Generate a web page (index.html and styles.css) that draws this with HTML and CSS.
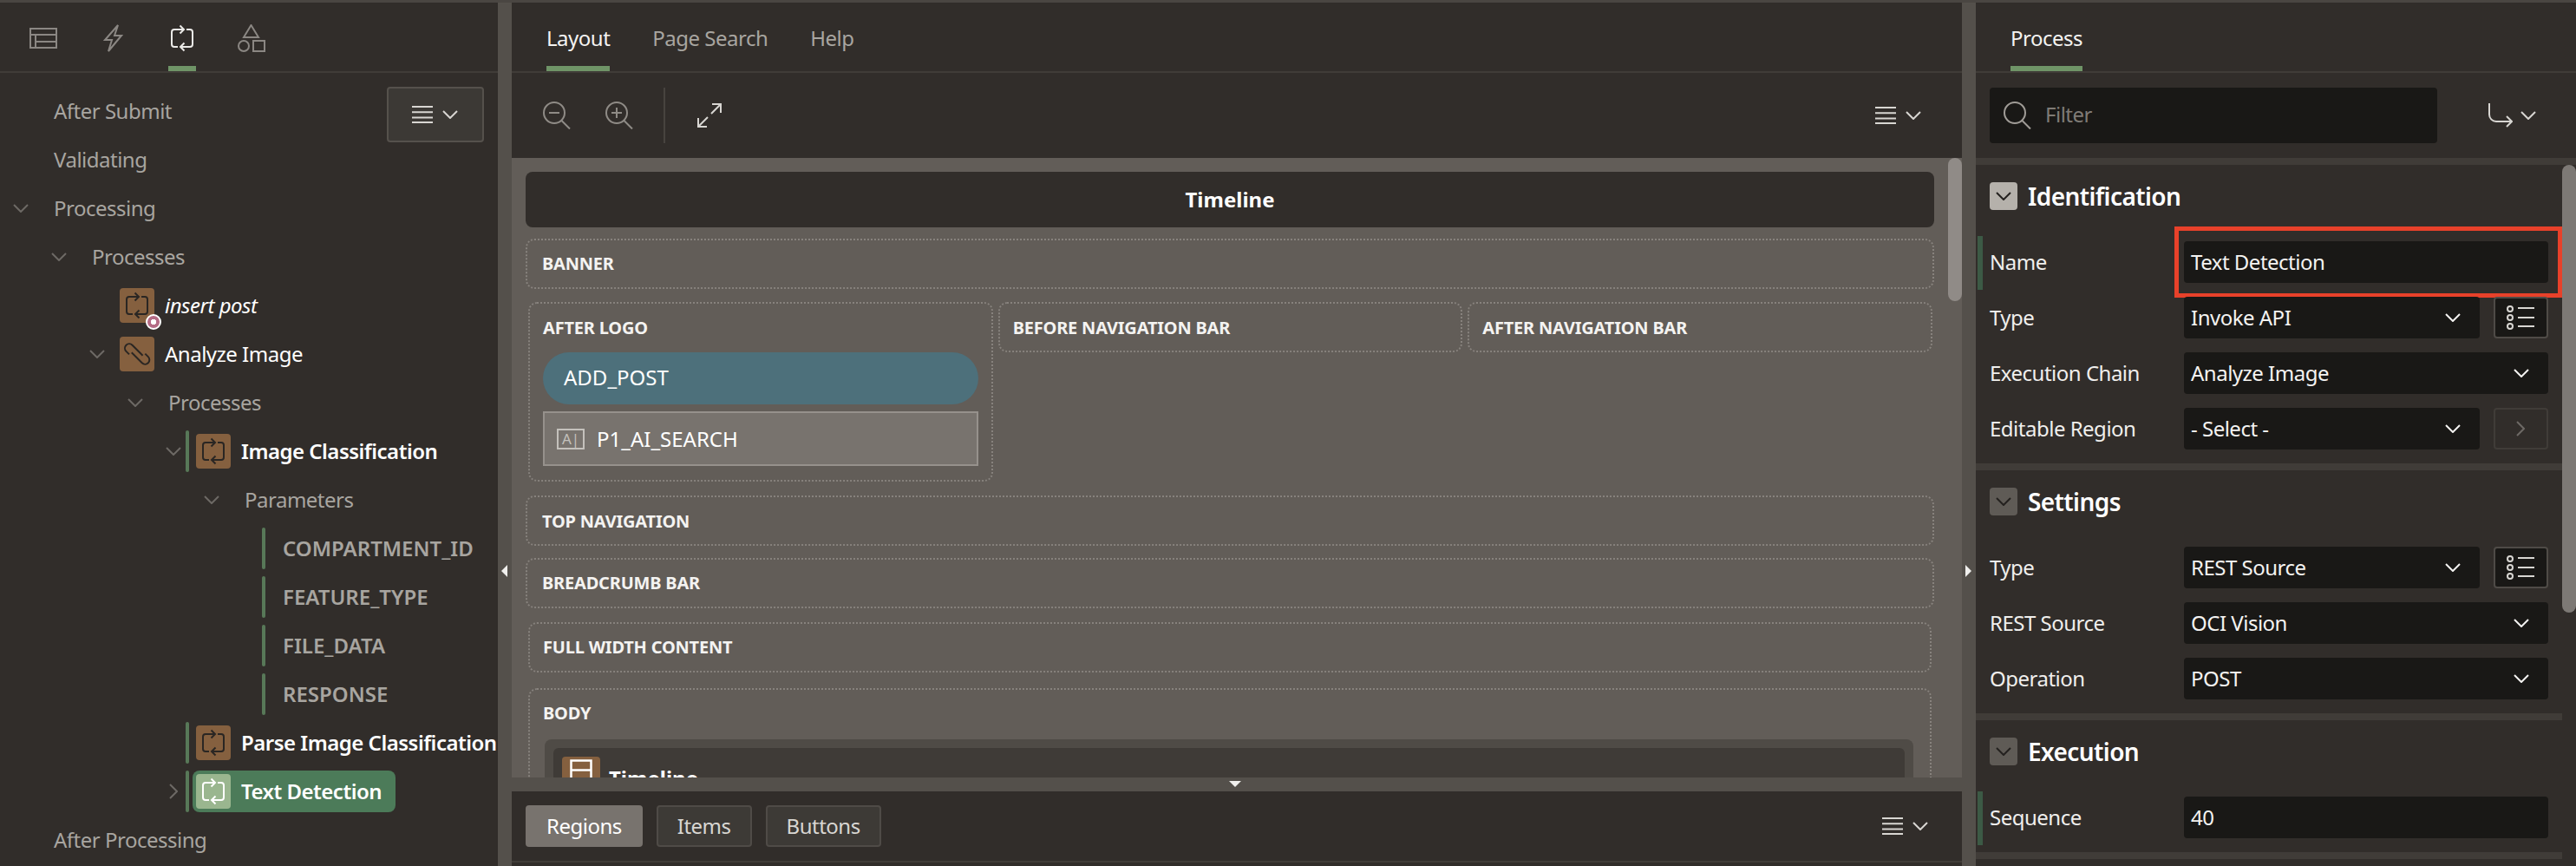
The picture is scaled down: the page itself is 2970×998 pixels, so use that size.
FILE: index.html
```html
<!doctype html>
<html lang="en">
  <head>
    <meta charset="UTF-8" />
    <title>Page Designer</title>
    <link rel="stylesheet" href="styles.css">
  </head>
  <body>
    <svg class="defs" width="0" height="0">
      <symbol id="loop" viewBox="0 0 32 32">
        <path d="M17 6H7a3 3 0 0 0-3 3v14a3 3 0 0 0 3 3h4M13.5 1.5 18 6l-4.500 4.500M21 6h4a3 3 0 0 1 3 3v14a3 3 0 0 1-3 3H15M18.500 21.500 14 26l4.500 4.500" fill="none" stroke="currentColor" stroke-width="2" />
      </symbol>
      <symbol id="chain" viewBox="0 0 32 32">
        <path d="M7 16.400 3.460 12.840A5 5 0 0 1 10.540 5.760L22.540 17.760M25.300 15.600 28.840 19.160A5 5 0 0 1 21.760 26.240L9.760 14.240" fill="none" stroke="currentColor" stroke-width="2" />
      </symbol>
      <symbol id="chev" viewBox="0 0 18 10">
        <path d="M1 1l8 8 8-8" fill="none" stroke="currentColor" stroke-width="2" />
      </symbol>
      <symbol id="menu" viewBox="0 0 24 20">
        <path d="M0 1h24M0 7.300h24M0 13.600h24M0 19h24" fill="none" stroke="currentColor" stroke-width="2" />
      </symbol>
      <symbol id="lov" viewBox="0 0 32 28">
        <circle cx="4" cy="4" r="3" fill="none" stroke="currentColor" stroke-width="2" />
        <circle cx="4" cy="14" r="3" fill="none" stroke="currentColor" stroke-width="2" />
        <circle cx="4" cy="24" r="3" fill="none" stroke="currentColor" stroke-width="2" />
        <path d="M13 3h19M13 14h19M13 24h19" fill="none" stroke="currentColor" stroke-width="2" />
      </symbol>
    </svg>

    <div class="app">
      <!-- tree column -->
      <div class="panel tree-panel">
        <div class="tabs icon-tabs">
          <div class="icon-tab">
            <svg width="32" height="24" viewBox="0 0 32 24"><path d="M1 1h30v22H1zM1 8h30M7 8v15M7 16h24" fill="none" stroke="currentColor" stroke-width="2" /></svg>
          </div>
          <div class="icon-tab">
            <svg width="24" height="32" viewBox="0 0 24 32"><path d="M18 1 3 18h8L7 31l15-18h-8z" fill="none" stroke="currentColor" stroke-width="2" /></svg>
          </div>
          <div class="icon-tab active">
            <svg width="32" height="32"><use href="#loop" /></svg>
          </div>
          <div class="icon-tab">
            <svg width="32" height="32" viewBox="0 0 32 32"><path d="M15.500 1 24 15H7zM18 19h13v12H18z" fill="none" stroke="currentColor" stroke-width="2" /><circle cx="7" cy="25" r="6" fill="none" stroke="currentColor" stroke-width="2" /></svg>
          </div>
        </div>

        <div class="tree">
          <div class="tree-row"><span class="twist"></span><span class="label">After Submit</span></div>
          <div class="tree-row"><span class="twist"></span><span class="label">Validating</span></div>
          <div class="tree-row"><span class="twist"><svg class="chev" width="18" height="10"><use href="#chev" /></svg></span><span class="label">Processing</span></div>
          <div class="tree-row lvl-1"><span class="twist"><svg class="chev" width="18" height="10"><use href="#chev" /></svg></span><span class="label">Processes</span></div>
          <div class="tree-row lvl-2">
            <span class="twist"></span>
            <span class="tile"><svg width="32" height="32"><use href="#loop" /></svg><span class="badge"></span></span>
            <span class="name italic">insert post</span>
          </div>
          <div class="tree-row lvl-2">
            <span class="twist"><svg class="chev" width="18" height="10"><use href="#chev" /></svg></span>
            <span class="tile"><svg width="32" height="32"><use href="#chain" /></svg></span>
            <span class="name">Analyze Image</span>
          </div>
          <div class="tree-row lvl-3"><span class="twist"><svg class="chev" width="18" height="10"><use href="#chev" /></svg></span><span class="label">Processes</span></div>
          <div class="tree-row lvl-4 barred">
            <span class="twist"><svg class="chev" width="18" height="10"><use href="#chev" /></svg></span>
            <span class="bar"></span>
            <span class="tile"><svg width="32" height="32"><use href="#loop" /></svg></span>
            <span class="name bold">Image Classification</span>
          </div>
          <div class="tree-row lvl-5"><span class="twist"><svg class="chev" width="18" height="10"><use href="#chev" /></svg></span><span class="label">Parameters</span></div>
          <div class="tree-row lvl-6 barred param"><span class="twist"></span><span class="bar"></span><span class="label">COMPARTMENT_ID</span></div>
          <div class="tree-row lvl-6 barred param"><span class="twist"></span><span class="bar"></span><span class="label">FEATURE_TYPE</span></div>
          <div class="tree-row lvl-6 barred param"><span class="twist"></span><span class="bar"></span><span class="label">FILE_DATA</span></div>
          <div class="tree-row lvl-6 barred param"><span class="twist"></span><span class="bar"></span><span class="label">RESPONSE</span></div>
          <div class="tree-row lvl-4 barred">
            <span class="twist"></span>
            <span class="bar"></span>
            <span class="tile"><svg width="32" height="32"><use href="#loop" /></svg></span>
            <span class="name bold">Parse Image Classification</span>
          </div>
          <div class="tree-row lvl-4 barred selected">
            <span class="twist"><svg class="chev right" width="18" height="10"><use href="#chev" /></svg></span>
            <span class="bar"></span>
            <span class="pill">
              <span class="tile"><svg width="32" height="32"><use href="#loop" /></svg></span>
              <span class="name bold">Text Detection</span>
            </span>
          </div>
          <div class="tree-row"><span class="twist"></span><span class="label">After Processing</span></div>
        </div>

        <div class="tree-menu">
          <svg width="24" height="20"><use href="#menu" /></svg>
          <svg width="18" height="10"><use href="#chev" /></svg>
        </div>
      </div>

      <div class="splitter"><span class="arrow left"></span></div>

      <!-- layout column -->
      <div class="panel center-panel">
        <div class="tabs text-tabs">
          <div class="text-tab active">Layout</div>
          <div class="text-tab">Page Search</div>
          <div class="text-tab">Help</div>
        </div>

        <div class="toolbar">
          <svg class="zoom-icon" width="32" height="32" viewBox="0 0 32 32"><circle cx="13" cy="13" r="12" fill="none" stroke="currentColor" stroke-width="2" /><path d="M7 13h12M21.500 22 31 31.500" fill="none" stroke="currentColor" stroke-width="2" /></svg>
          <svg class="zoom-icon" width="32" height="32" viewBox="0 0 32 32"><circle cx="13" cy="13" r="12" fill="none" stroke="currentColor" stroke-width="2" /><path d="M7 13h12M13 7v12M21.500 22 31 31.500" fill="none" stroke="currentColor" stroke-width="2" /></svg>
          <span class="divider"></span>
          <svg class="expand-icon" width="28" height="28" viewBox="0 0 28 28"><path d="M17 1h10v10M27 1 16 12M11 27H1V17M1 27l11-11" fill="none" stroke="currentColor" stroke-width="2" /></svg>
          <span class="menu-btn">
            <svg width="24" height="20"><use href="#menu" /></svg>
            <svg width="18" height="10"><use href="#chev" /></svg>
          </span>
        </div>

        <div class="canvas">
          <div class="page-title">Timeline</div>
          <div class="slot banner">BANNER</div>
          <div class="slot-row">
            <div class="slot">
              AFTER LOGO
              <div class="btn-comp">ADD_POST</div>
              <div class="item-comp"><span class="ai-icon">A|</span>P1_AI_SEARCH</div>
            </div>
            <div class="slot short">BEFORE NAVIGATION BAR</div>
            <div class="slot short">AFTER NAVIGATION BAR</div>
          </div>
          <div class="slot top-nav">TOP NAVIGATION</div>
          <div class="slot crumb">BREADCRUMB BAR</div>
          <div class="slot inset full">FULL WIDTH CONTENT</div>
          <div class="slot inset body-slot">
            BODY
            <div class="region-wrap">
              <div class="region">
                <span class="region-tile">
                  <svg width="26" height="38" viewBox="0 0 26 38"><path d="M1.500 1.500h23v35h-23zM1.500 12.500h23M1.500 23.500h23" fill="none" stroke="#fff" stroke-width="2.500" /></svg>
                </span>
                <span class="region-name">Timeline</span>
              </div>
            </div>
          </div>
          <span class="canvas-scroll"></span>
        </div>

        <div class="h-splitter"><span class="arrow down"></span></div>

        <div class="gallery">
          <span class="gal-btn active">Regions</span>
          <span class="gal-btn">Items</span>
          <span class="gal-btn">Buttons</span>
          <span class="menu-btn gal-menu">
            <svg width="24" height="20"><use href="#menu" /></svg>
            <svg width="18" height="10"><use href="#chev" /></svg>
          </span>
        </div>
      </div>

      <div class="splitter"><span class="arrow right"></span></div>

      <!-- property editor -->
      <div class="panel props-panel">
        <div class="tabs text-tabs props-tabs">
          <div class="text-tab active">Process</div>
        </div>

        <div class="filter-bar">
          <div class="filter">
            <svg class="search-icon" width="32" height="32" viewBox="0 0 32 32"><circle cx="13" cy="13" r="12" fill="none" stroke="currentColor" stroke-width="2" /><path d="M21.500 22 31 31.500" fill="none" stroke="currentColor" stroke-width="2" /></svg>
            <span class="filter-text">Filter</span>
          </div>
          <span class="goto">
            <svg width="28" height="28" viewBox="0 0 28 28"><path d="M1 0v13a8 8 0 0 0 8 8h18M21 15l6 6-6 6" fill="none" stroke="currentColor" stroke-width="2" /></svg>
            <svg width="18" height="10"><use href="#chev" /></svg>
          </span>
        </div>

        <div class="props">
          <div class="section">
            <div class="section-head">
              <span class="toggle focus"><svg width="18" height="10"><use href="#chev" /></svg></span>
              Identification
            </div>
            <div class="prop req">
              <span class="prop-label">Name</span>
              <div class="field"><span>Text Detection</span></div>
              <span class="highlight"></span>
            </div>
            <div class="prop">
              <span class="prop-label">Type</span>
              <div class="field select"><span>Invoke API</span><svg width="18" height="10"><use href="#chev" /></svg></div>
              <span class="lov"><svg width="32" height="28"><use href="#lov" /></svg></span>
            </div>
            <div class="prop">
              <span class="prop-label">Execution Chain</span>
              <div class="field select"><span>Analyze Image</span><svg width="18" height="10"><use href="#chev" /></svg></div>
            </div>
            <div class="prop">
              <span class="prop-label">Editable Region</span>
              <div class="field select"><span>- Select -</span><svg width="18" height="10"><use href="#chev" /></svg></div>
              <span class="lov dim"><svg class="chev right" width="18" height="10"><use href="#chev" /></svg></span>
            </div>
          </div>

          <div class="section">
            <div class="section-head">
              <span class="toggle"><svg width="18" height="10"><use href="#chev" /></svg></span>
              Settings
            </div>
            <div class="prop">
              <span class="prop-label">Type</span>
              <div class="field select"><span>REST Source</span><svg width="18" height="10"><use href="#chev" /></svg></div>
              <span class="lov"><svg width="32" height="28"><use href="#lov" /></svg></span>
            </div>
            <div class="prop">
              <span class="prop-label">REST Source</span>
              <div class="field select"><span>OCI Vision</span><svg width="18" height="10"><use href="#chev" /></svg></div>
            </div>
            <div class="prop">
              <span class="prop-label">Operation</span>
              <div class="field select"><span>POST</span><svg width="18" height="10"><use href="#chev" /></svg></div>
            </div>
          </div>

          <div class="section">
            <div class="section-head">
              <span class="toggle"><svg width="18" height="10"><use href="#chev" /></svg></span>
              Execution
            </div>
            <div class="prop req">
              <span class="prop-label">Sequence</span>
              <div class="field"><span>40</span></div>
            </div>
          </div>
          <span class="props-scroll"></span>
        </div>
      </div>
    </div>
  </body>
</html>
```

FILE: styles.css
```css
* {
  box-sizing: border-box;
}

body {
  margin: 0;
  width: 2970px;
  height: 998px;
  overflow: hidden;
  font-family: "Noto Sans", sans-serif;
  font-size: 24px;
  letter-spacing: -0.5px;
  color: #f0efed;
  background-color: #312d2a;
  border-top: 3px solid #4a4642;
}

.defs {
  position: absolute;
}

svg {
  display: block;
  flex: none;
}

.app {
  display: flex;
  height: 995px;
}

.panel {
  position: relative;
  display: flex;
  flex-direction: column;
  overflow: hidden;
  background-color: #312d2a;
}

.tree-panel {
  width: 574px;
}

.center-panel {
  width: 1672px;
}

.props-panel {
  flex: 1;
}

.splitter {
  position: relative;
  width: 16px;
  background-color: #54504b;
}

.arrow {
  position: absolute;
  width: 0;
  height: 0;
  border-style: solid;
  border-color: transparent;
}

.arrow.left {
  top: 648px;
  left: 4px;
  border-width: 7px 7px 7px 0;
  border-right-color: #f0efed;
}

.arrow.right {
  top: 648px;
  left: 4px;
  border-width: 7px 0 7px 7px;
  border-left-color: #f0efed;
}

.arrow.down {
  top: 4px;
  left: 827px;
  border-width: 7px 7px 0 7px;
  border-top-color: #f0efed;
}

/* tabs */
.tabs {
  display: flex;
  flex: none;
  height: 81px;
  border-bottom: 2px solid #403c38;
}

.icon-tabs {
  gap: 48px;
  padding-left: 34px;
}

.icon-tab {
  width: 32px;
  height: 79px;
  padding-top: 25px;
  color: #8b8783;
  display: flex;
  justify-content: center;
}

.icon-tab:first-child {
  padding-top: 29px;
}

.icon-tab.active {
  color: #ecebe8;
  border-bottom: 6px solid #6f9467;
}

.text-tabs {
  gap: 49px;
  padding-left: 40px;
}

.text-tab {
  height: 79px;
  padding-top: 24px;
  line-height: 34px;
  color: #a8a5a0;
}

.text-tab.active {
  color: #f4f3f1;
  border-bottom: 6px solid #6f9467;
}

/* page tree */
.tree {
  padding-top: 16px;
}

.tree-row {
  display: flex;
  align-items: center;
  height: 56px;
  white-space: nowrap;
}

.lvl-1 { padding-left: 44px; }
.lvl-2 { padding-left: 88px; }
.lvl-3 { padding-left: 132px; }
.lvl-4 { padding-left: 176px; }
.lvl-5 { padding-left: 220px; }
.lvl-6 { padding-left: 264px; }

.twist {
  flex: none;
  width: 44px;
  padding-left: 15px;
}

.chev {
  color: #6d6965;
}

.chev.right {
  transform: rotate(-90deg);
}

.label {
  margin-left: 18px;
  padding-bottom: 2px;
  color: #a8a5a0;
}

.tile {
  position: relative;
  flex: none;
  display: flex;
  align-items: center;
  justify-content: center;
  width: 40px;
  height: 40px;
  margin-left: 6px;
  border-radius: 4px;
  color: #2a2623;
  background-color: #85603f;
}

.name {
  margin-left: 12px;
  padding-bottom: 2px;
  color: #fff;
}

.name.italic {
  font-style: italic;
}

.name.bold {
  font-weight: 600;
}

.badge {
  position: absolute;
  right: -8px;
  bottom: -8px;
  width: 18px;
  height: 18px;
  border-radius: 50%;
  border: 2px solid #fff;
  background: radial-gradient(circle, #fff 0 3px, #b46b85 3.5px);
}

.barred .twist {
  width: 38px;
}

.bar {
  flex: none;
  width: 4px;
  height: 48px;
  border-radius: 2px;
  background-color: #587858;
}

.barred .bar + .tile {
  margin-left: 8px;
}

.param .bar + .label {
  margin-left: 20px;
  font-weight: 600;
  letter-spacing: 0;
}

.pill {
  display: flex;
  align-items: center;
  height: 48px;
  margin-left: 4px;
  padding: 0 16px 0 4px;
  border-radius: 8px;
  background-color: #4c7b59;
}

.pill .tile {
  margin-left: 0;
  color: #fff;
  background-color: #9ab68f;
}

.tree-menu {
  position: absolute;
  top: 97px;
  left: 446px;
  display: flex;
  align-items: center;
  gap: 11px;
  width: 112px;
  height: 64px;
  padding-left: 27px;
  color: #d8d6d2;
  background-color: #3c3935;
  border: 2px solid #55514c;
  border-radius: 4px;
}

/* toolbar */
.toolbar {
  display: flex;
  flex: none;
  align-items: center;
  height: 98px;
  padding: 0 47px 0 36px;
}

.zoom-icon {
  color: #8f8b86;
  margin-right: 40px;
}

.divider {
  width: 2px;
  height: 64px;
  margin: 0 38px 0 -5px;
  background-color: #47433f;
}

.expand-icon {
  color: #d8d6d2;
  margin-left: -1px;
}

.menu-btn {
  display: flex;
  align-items: center;
  gap: 11px;
  margin-left: auto;
  color: #d8d6d2;
}

/* layout canvas */
.canvas {
  position: relative;
  flex: none;
  height: 714px;
  padding: 16px 32px 0 16px;
  overflow: hidden;
  background-color: #625d58;
}

.page-title {
  height: 64px;
  line-height: 64px;
  margin-bottom: 13px;
  text-align: center;
  font-weight: 700;
  letter-spacing: 0;
  color: #fff;
  background-color: #312d2a;
  border-radius: 8px;
}

.slot {
  padding: 0 17px 16px;
  line-height: 54px;
  font-size: 20px;
  font-weight: 700;
  letter-spacing: -0.2px;
  color: #f4f3f1;
  border: 2px dotted #87827d;
  border-radius: 10px;
}

.banner,
.top-nav,
.crumb,
.full,
.short {
  height: 58px;
  padding-bottom: 0;
}

.top-nav {
  margin-top: 16px;
  line-height: 55px;
}

.crumb {
  margin-top: 14px;
}

.full {
  margin-top: 16px;
}

.inset {
  margin-left: 3px;
  margin-right: 3px;
  padding-left: 15px;
}

.body-slot {
  margin-top: 18px;
}

.slot-row {
  display: grid;
  grid-template-columns: 1fr 1fr 1fr;
  align-items: start;
  gap: 6px;
  margin: 15px 2px 0 3px;
}

.slot-row .slot {
  padding-left: 15px;
  padding-right: 15px;
  line-height: 56px;
}

.btn-comp {
  height: 60px;
  padding-left: 24px;
  line-height: 58px;
  font-size: 24px;
  font-weight: 400;
  letter-spacing: 0;
  color: #fff;
  background-color: #4d707b;
  border-radius: 30px;
}

.item-comp {
  display: flex;
  align-items: center;
  height: 63px;
  margin-top: 8px;
  padding-left: 14px;
  font-size: 24px;
  font-weight: 400;
  letter-spacing: 0;
  color: #fff;
  background-color: #78736e;
  border: 2px solid #96918c;
}

.ai-icon {
  width: 32px;
  height: 24px;
  margin-right: 14px;
  line-height: 19px;
  text-align: center;
  font-size: 17px;
  color: #c4c1bc;
  border: 2px solid #c4c1bc;
}

.region-wrap {
  margin: 3px 2px 0;
  padding: 10px;
  background-color: #4f4b46;
  border-radius: 8px;
}

.region {
  display: flex;
  gap: 10px;
  padding: 10px;
  height: 120px;
  background-color: #3f3b37;
  border-radius: 6px;
}

.region-tile {
  display: flex;
  justify-content: center;
  align-items: center;
  width: 44px;
  height: 44px;
  background-color: #85603f;
  border-radius: 4px;
}

.region-name {
  line-height: 50px;
  font-size: 24px;
  letter-spacing: 0;
  color: #fff;
}

.canvas-scroll {
  position: absolute;
  top: 0;
  right: 0;
  width: 16px;
  height: 165px;
  background-color: #908b87;
  border-radius: 8px;
}

.h-splitter {
  position: relative;
  flex: none;
  height: 16px;
  background-color: #54504b;
}

/* gallery */
.gallery {
  display: flex;
  flex: none;
  align-items: center;
  gap: 16px;
  height: 82px;
  padding: 0 39px 0 16px;
  border-bottom: 2px solid #403c38;
}

.gal-btn {
  height: 48px;
  padding: 0 22px;
  line-height: 44px;
  color: #d8d6d2;
  background-color: #3d3a36;
  border: 2px solid #4f4b47;
  border-radius: 4px;
}

.gal-btn.active {
  color: #fff;
  background-color: #78736e;
  border-color: #78736e;
}

/* property editor */
.filter-bar {
  display: flex;
  flex: none;
  align-items: center;
  height: 98px;
  padding: 0 46px 0 16px;
}

.filter {
  display: flex;
  align-items: center;
  gap: 16px;
  width: 516px;
  height: 64px;
  padding-left: 16px;
  color: #7f7b76;
  background-color: #191816;
  border-radius: 4px;
}

.filter-text {
  padding-bottom: 3px;
}

.search-icon {
  color: #a09c97;
}

.goto {
  display: flex;
  align-items: center;
  gap: 9px;
  margin-left: auto;
  color: #d8d6d2;
}

.props {
  position: relative;
  padding-right: 16px;
  border-top: 8px solid #403c38;
}

.section {
  padding-bottom: 8px;
  border-bottom: 8px solid #403c38;
}

.section-head {
  display: flex;
  align-items: center;
  gap: 12px;
  height: 32px;
  margin: 20px 0 30px 16px;
  font-size: 28px;
  font-weight: 600;
  letter-spacing: -0.6px;
  color: #fff;
}

.toggle {
  display: flex;
  align-items: center;
  justify-content: center;
  width: 32px;
  height: 32px;
  color: #24211f;
  background-color: #5f5b56;
  border-radius: 4px;
}

.toggle.focus {
  background-color: #b5b1ab;
}

.prop {
  position: relative;
  display: flex;
  align-items: center;
  gap: 16px;
  height: 62px;
  margin: 2px 16.500px 0 2px;
  padding: 0 0 2px 8px;
  border-left: 6px solid transparent;
}

.prop.req {
  border-left-color: #3c5a45;
}

.prop-label {
  flex: none;
  width: 208px;
  padding-bottom: 2px;
}

.field {
  display: flex;
  align-items: center;
  justify-content: space-between;
  flex: 1;
  height: 48px;
  padding: 0 22px 0 8px;
  color: #f4f3f1;
  background-color: #191816;
  border-radius: 4px;
}

.field span {
  padding-bottom: 2px;
}

.lov {
  display: flex;
  align-items: center;
  justify-content: center;
  flex: none;
  width: 63px;
  height: 48px;
  color: #d8d6d2;
  background-color: #191816;
  border: 2px solid #4f4b47;
  border-radius: 4px;
}

.lov.dim {
  background-color: #312d2a;
  border-color: #403c38;
}

.highlight {
  position: absolute;
  top: -11px;
  left: 221px;
  width: 447px;
  height: 82px;
  border: 5px solid #e8412a;
}

.props-scroll {
  position: absolute;
  top: 0;
  right: 0;
  width: 16px;
  height: 516px;
  background-color: #7d7975;
  border-radius: 8px;
}
```
